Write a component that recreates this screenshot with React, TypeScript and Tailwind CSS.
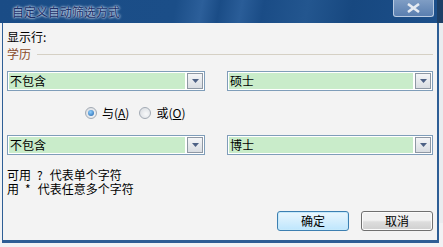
import React from "react";

const font = "font-['SimSun','Noto_Sans_CJK_SC','Liberation_Sans',sans-serif]";

const Combo = ({ value, width }: { value: string; width: string }) => (
  <div className={`${width} h-[20px] border border-[#7f9db9] bg-white p-px flex`}>
    <div className="flex-1 bg-[#c9ecca] text-[12px] leading-[16px] pl-px text-black">{value}</div>
    <div className="w-[16px] h-[16px] ml-[2px] border border-[#8e98a4] bg-[linear-gradient(#f4f5f7,#d9dde2)] flex items-center justify-center">
      <svg width="7" height="4" viewBox="0 0 7 4">
        <path d="M0 0h7L3.5 4z" fill="#4d6185" />
      </svg>
    </div>
  </div>
);

const Radio = ({ checked }: { checked?: boolean }) => (
  <span className="w-[12px] h-[12px] rounded-full border border-[#a2aab4] bg-[radial-gradient(circle_at_60%_60%,#f8f9fa,#d4d8dd)] flex items-center justify-center">
    {checked && <span className="w-[6px] h-[6px] rounded-full bg-[radial-gradient(circle_at_40%_35%,#8fd0ff,#1d5fa8)]" />}
  </span>
);

const Button = ({ label, active }: { label: string; active?: boolean }) => (
  <button
    className={`w-[72px] h-[20px] rounded-[3px] border text-[12px] leading-[16px] text-black ${
      active
        ? "border-[#3c7fb1] bg-[linear-gradient(#eaf6fd,#bee6fd)] shadow-[inset_0_0_0_1px_#c6e9fb]"
        : "border-[#707070] bg-[linear-gradient(#f2f2f2_45%,#dddddd_55%,#cfcfcf)] shadow-[inset_0_0_0_1px_#fbfbfb]"
    }`}
  >
    {label}
  </button>
);

export default function App() {
  return (
    <div className={`w-[443px] h-[247px] bg-[#f1f2f4] flex flex-col overflow-hidden ${font}`}>
      <div className="h-[23px] flex items-start">
        <div className="w-[437px] h-[23px] flex items-start bg-[linear-gradient(100deg,#1a4c86_0%,#1b4e88_40%,#2c5f9a_46%,#1a4c86_50%,#2a5d98_55%,#1a4c86_60%,#23568f_70%,#174880_80%,#1c4f8a_100%)]">
          <div className="pl-[12px] pt-[4px] text-[12px] leading-[16px] text-[#1a2f68] [text-shadow:0_0_2px_#e4eefb,0_0_3px_#e4eefb]">
            自定义自动筛选方式
          </div>
          <div className="ml-auto mr-[3px] w-[41px] h-[17px] rounded-b-[3px] border border-t-0 border-[#b9cbe2] bg-[linear-gradient(#7f9dc4,#5a7fb0)] flex items-center justify-center">
            <svg width="13" height="10" viewBox="0 0 13 10">
              <path d="M1 1l11 8M12 1L1 9" stroke="#e6ebf2" strokeWidth="2.6" />
            </svg>
          </div>
        </div>
        <div className="flex-1 h-[23px] bg-[#1d3f66]" />
      </div>
      <div className="flex">
        <div className="w-[437px] h-[220px] ml-[2px] border-l border-r-2 border-b-[3px] border-[#2e5e95] bg-[#f3f3f3] pl-[4px] pr-[3px] flex flex-col text-black">
          <div className="mt-[7px] text-[12px] leading-[14px]">显示行:</div>
          <div className="mt-[3px] flex items-center">
            <span className="text-[12px] leading-[14px] text-[#8a4b2a]">学历</span>
            <div className="ml-[6px] mr-[1px] flex-1 h-px bg-[#d5d0c4]" />
          </div>
          <div className="mt-[10px] flex gap-[22px]">
            <Combo value="不包含" width="w-[198px]" />
            <Combo value="硕士" width="w-[206px]" />
          </div>
          <div className="mt-[15px] ml-[78px] flex items-center text-[12px] leading-[14px]">
            <Radio checked />
            <span className="ml-[5px]">与(<span className="underline">A</span>)</span>
            <span className="ml-[10px]" />
            <Radio />
            <span className="ml-[5px]">或(<span className="underline">O</span>)</span>
          </div>
          <div className="mt-[15px] flex gap-[22px]">
            <Combo value="不包含" width="w-[198px]" />
            <Combo value="博士" width="w-[206px]" />
          </div>
          <div className="mt-[13px] text-[12px] leading-[14px]">
            <div className="flex">
              <span>可用</span>
              <span className="ml-[6px] mr-[7px]">?</span>
              <span>代表单个字符</span>
            </div>
            <div className="flex">
              <span>用</span>
              <span className="ml-[6px] mr-[7px]">*</span>
              <span>代表任意多个字符</span>
            </div>
          </div>
          <div className="mt-[15px] flex justify-end gap-[12px] pr-[1px]">
            <Button label="确定" active />
            <Button label="取消" />
          </div>
        </div>
        <div className="flex-1 h-[200px] bg-[#e9ecef]" />
      </div>
    </div>
  );
}
